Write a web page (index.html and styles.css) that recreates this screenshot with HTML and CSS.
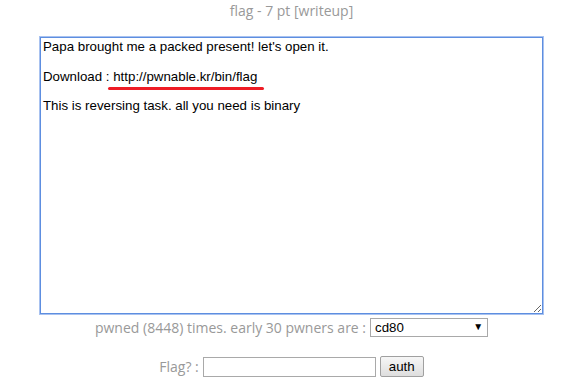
FILE: index.html
```html
<!DOCTYPE html>
<html>
<head>
    <meta charset="utf-8">
    <title> flag </title>
    <link rel="stylesheet" href="styles.css">
</head>
<body>
    <div class="challenge">
        <p class="title">flag - 7 pt [writeup]</p>

        <div class="desc_box">
            <textarea class="desc" readonly>Papa brought me a packed present! let's open it.

Download : http://pwnable.kr/bin/flag

This is reversing task. all you need is binary</textarea>
            <span class="mark"></span>
        </div>

        <p class="pwned">
            pwned (8448) times. early 30 pwners are :
            <span class="pick">
                <select class="pwners">
                    <option>cd80</option>
                </select>
                <span class="arrow">&#9660;</span>
            </span>
        </p>

        <form class="auth_form" onsubmit="return false">
            <label class="flag_label">Flag? :</label>
            <input class="flag_input" type="text">
            <button class="auth_btn">auth</button>
        </form>
    </div>
</body>
</html>
```

FILE: styles.css
```css
:root {
    --grey:   #999999;
    --blue:   #7aa2e6;
    --line:   #a9a9a9;
    --red:    #ee1c25;
}

body {
    margin: 0;
    background-color: #ffffff;
    font-family: "Open Sans", sans-serif;
}

.challenge {
    display: flex;
    flex-direction: column;
    align-items: center;
}

.title {
    margin: 1px 0 0 0;
    height: 36px;

    color: var( --grey );
    font-size: 14px;
}

.desc_box {
    position: relative;
}

.desc {
    display: block;
    box-sizing: border-box;
    width: 503px;
    height: 277px;
    margin: 0;
    padding: 2px 2px;

    color: #000000;
    font-family: "Liberation Sans", Arial, sans-serif;
    font-size: 13.3px;
    line-height: 14.8px;

    border: 1px solid #5d8ee0;
    box-shadow: 0 0 0 1px #a8c2f0;
    outline: none;
}

/* red underline drawn over the download link */
.mark {
    position: absolute;
    left: 68px;
    top: 50px;
    width: 156px;
    height: 3px;

    background-color: var( --red );
    border-radius: 2px;
}

.pwned {
    display: flex;
    align-items: center;
    gap: 4px;
    margin: 3px 0 0 0;

    color: var( --grey );
    font-size: 14px;
}

.pick {
    position: relative;
}

.pwners {
    appearance: none;
    width: 118px;
    height: 19px;
    padding: 0 4px;

    font-family: "Liberation Sans", Arial, sans-serif;
    font-size: 13.3px;
    color: #000000;

    background-color: #ffffff;
    border: 1px solid var( --line );
    border-radius: 0;
}

.arrow {
    position: absolute;
    right: 5px;
    top: 2px;

    font-size: 10px;
    color: #000000;
    pointer-events: none;
}

.auth_form {
    display: flex;
    align-items: center;
    gap: 4px;
    margin: 19px 0 0 0;

    color: var( --grey );
    font-size: 14px;
}

.flag_input {
    box-sizing: border-box;
    width: 173px;
    height: 20px;
    margin: 0;

    border: 1px solid var( --line );
}

.auth_btn {
    box-sizing: border-box;
    height: 21px;
    padding: 0 8px;

    font-family: "Liberation Sans", Arial, sans-serif;
    font-size: 13.3px;
    color: #000000;

    background: linear-gradient( #f6f6f6, #dedede );
    border: 1px solid #a0a0a0;
    border-radius: 2px;
}
```
